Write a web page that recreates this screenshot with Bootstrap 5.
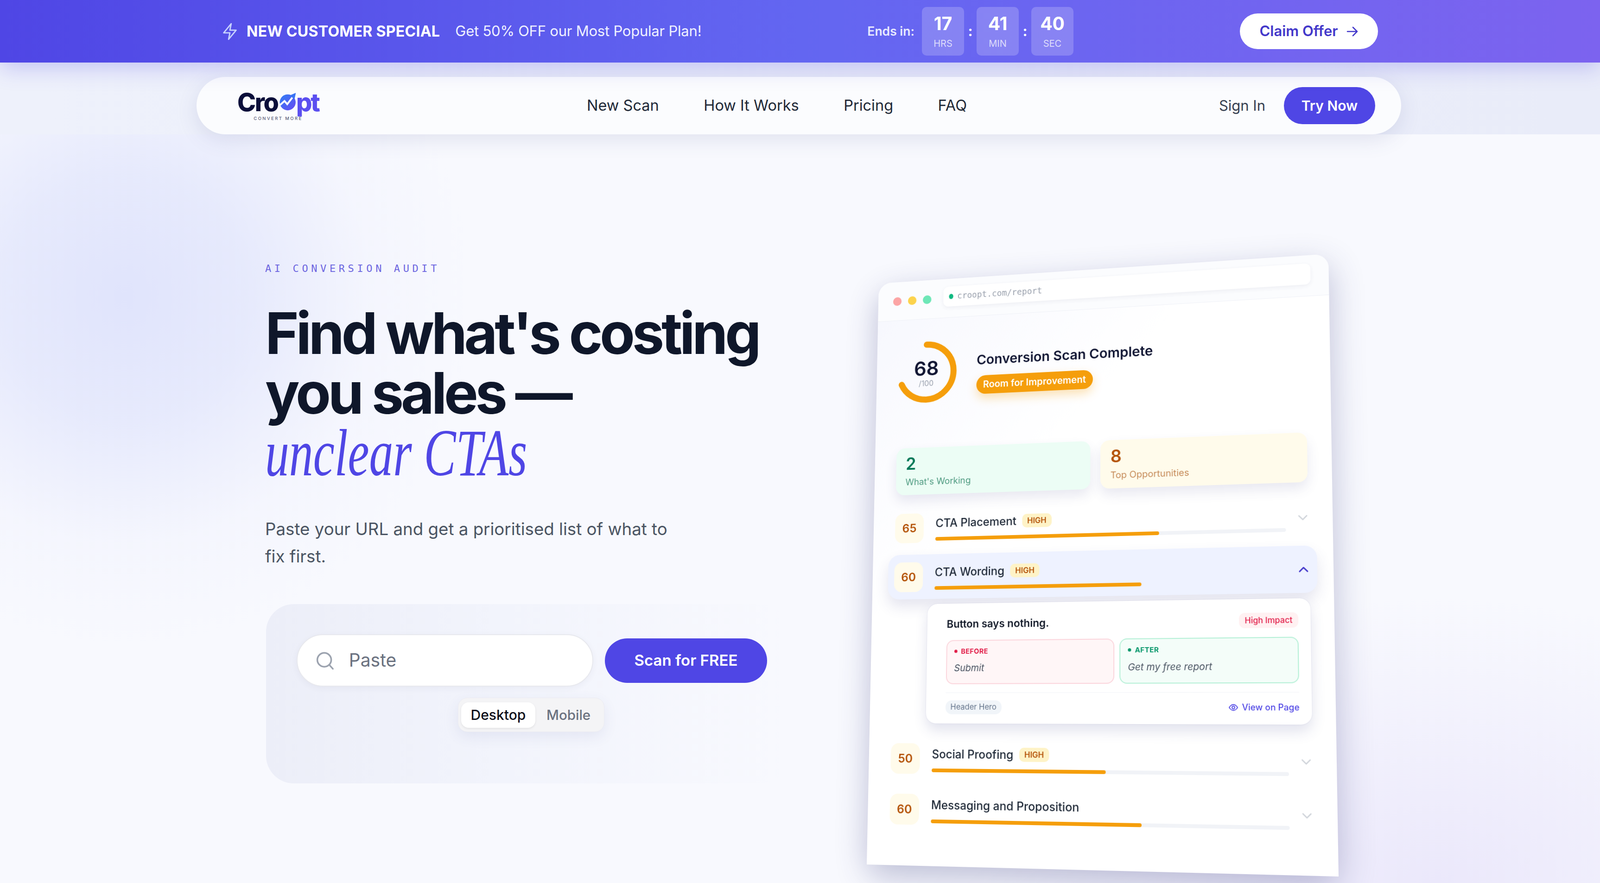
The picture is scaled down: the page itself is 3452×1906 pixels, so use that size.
<!DOCTYPE html>
<html lang="en">
<head>
    <meta charset="UTF-8" />
    <meta name="viewport" content="width=device-width, initial-scale=1" />
    <title>Croopt - AI Conversion Audit</title>
    <link href="https://cdn.jsdelivr.net/npm/bootstrap@5.3.0/dist/css/bootstrap.min.css" rel="stylesheet" />
    <style>
        html, body { margin: 0; height: 1906px; overflow: hidden; }
        body { font-family: Inter, "Liberation Sans", sans-serif; color: #111827; background: #f8f9ff; }

        .page-shell {
            height: 1906px; overflow: hidden;
            background:
                radial-gradient(circle 760px at 270px 640px, #e0e4fc 0%, rgba(226,230,252,.8) 35%, rgba(238,240,253,.35) 70%, rgba(238,240,253,0) 100%),
                radial-gradient(ellipse 1000px 620px at 3100px 1906px, #ebe8fb 0%, rgba(235,232,251,0) 100%),
                #f8f9fe;
        }

        /* promo strip */
        .promo-bar {
            height: 135px; padding: 0 479px 0 479px; color: #fff; position: relative; z-index: 3;
            background: linear-gradient(90deg, #4f46e5 0%, #6366f1 50%, #7c63ef 100%);
            box-shadow: 0 12px 44px rgba(79,70,229,.26);
        }
        .promo-strong { font-size: 32px; font-weight: 700; margin-left: 19px; letter-spacing: .3px; }
        .promo-text { font-size: 31px; margin-left: 33px; letter-spacing: -.22px; color: #eef0ff; }
        .ends-label { font-size: 26.5px; font-weight: 600; margin-left: 358px; margin-right: 16px; color: #e8eaff; }
        .time-box { width: 91px; height: 105px; background: rgba(255,255,255,.2); border-radius: 10px; text-align: center; }
        .time-num { font-size: 39px; font-weight: 700; line-height: 1; margin-top: 16px; }
        .time-unit { font-size: 20px; line-height: 1; margin-top: 14px; color: rgba(255,255,255,.72); }
        .time-sep { width: 27px; text-align: center; font-size: 30px; font-weight: 700; }
        .claim-btn {
            width: 298px; height: 77px; margin-left: auto; margin-right: 0;
            background: #fff; color: #4338ca; font-size: 31px; font-weight: 600;
            display: flex; align-items: center; justify-content: center; gap: 18px; border: 0;
        }

        /* header + nav */
        .head-zone {
            height: 155px; padding: 31px 429px 0 424px;
            background: linear-gradient(90deg, #eef1fb 0%, #e9ecf9 100%);
        }
        .main-nav {
            height: 124px; padding: 0 56px 0 88px; background: #fbfcfe;
            box-shadow: 0 12px 44px rgba(70,74,140,.13);
        }
        .logo-box { width: 176px; height: 72px; position: relative; }
        .logo-word { font-size: 54px; font-weight: 800; line-height: 54px; letter-spacing: -2.4px; color: #0b0f3a; display: flex; align-items: flex-end; margin-top: 2px; }
        .logo-word svg { margin: 0 1px 9px 3px; }
        .logo-end { color: #5b4ff0; letter-spacing: -3px; }
        .logo-tag { font-size: 9.5px; letter-spacing: 2.4px; color: #5b5f7a; text-align: center; line-height: 12px; margin-top: 2px; font-weight: 500; }
        .main-links { margin-left: 578px; gap: 96.5px; }
        .main-nav .main-links .nav-link { font-size: 32.5px; font-weight: 400; color: #1f2937; padding: 0; }
        .signin-link { font-size: 31px; font-weight: 400; color: #374151; margin-left: auto; margin-right: 40px; text-decoration: none; }
        .try-btn { width: 197px; height: 80px; background: #4f46e5; color: #fff; font-size: 30px; font-weight: 600; border: 0; }

        /* hero */
        .hero-left { padding: 273px 0 0 572px; flex-shrink: 0; box-sizing: content-box; width: 752px; margin-right: 572px; }
        .eyebrow { font-family: "DejaVu Sans Mono", "Liberation Mono", monospace; font-size: 22px; line-height: 33px; letter-spacing: 6.6px; color: #6d66e0; margin-bottom: 59px; }
        .hero-title { font-family: Inter, sans-serif; font-size: 124px; line-height: 129px; font-weight: 700; letter-spacing: -6.3px; color: #0f172a; margin: 0 0 66px; white-space: nowrap; }
        .hero-accent { font-family: "Liberation Serif", serif; font-size: 145px; font-style: italic; font-weight: 400; color: #4f46e5; letter-spacing: 0; display: inline-block; transform: scaleX(.715); transform-origin: 0 50%; }
        .hero-sub { font-size: 36.7px; line-height: 59px; color: #4b5563; margin: 0 0 74px; white-space: nowrap; }

        .scan-panel {
            width: 1130px; height: 387px; padding: 65px 0 0 66px; margin-left: 2px; border-radius: 60px;
            background: linear-gradient(90deg, #eceef8 0%, #f2f4fc 45%, rgba(246,248,255,0) 100%);
        }
        .url-field {
            width: 640px; height: 113px; background: #fff; border: 2px solid #e8e9ee; padding-left: 40px; gap: 32px;
            box-shadow: 0 4px 14px rgba(60,60,100,.05);
        }
        .url-input { font-size: 39px; border: 0; padding: 0; box-shadow: none; background: transparent; color: #374151; }
        .url-input::placeholder { color: #6b7280; opacity: 1; }
        .url-input:focus { box-shadow: none; }
        .scan-btn { width: 350px; height: 96px; margin-left: 25px; background: #4f46e5; color: #fff; font-size: 33px; font-weight: 600; border: 0; }
        .view-toggle {
            width: 316px; height: 74px; margin: 24px 0 0 348px; padding: 9px 6px 8px; border-radius: 20px;
            background: #f4f4f6; border: 1px solid #ececf2; box-shadow: 0 10px 30px rgba(70,74,140,.09); font-size: 30px;
        }
        .view-on { width: 160px; background: #fff; border-radius: 16px; color: #0f0f1a; font-weight: 500; box-shadow: 0 2px 5px rgba(0,0,0,.08); }
        .view-off { color: #6b7280; font-weight: 500; margin-left: 24px; font-size: 29.5px; }

        /* tilted report mock */
        .mock-card {
            width: 1000px; height: 1300px; margin-top: 322px; flex-shrink: 0; border: 0; border-radius: 30px;
            background: #fff; box-shadow: 0 24px 70px rgba(50,52,120,.3);
            transform-origin: 0 0;
            transform: matrix3d(.90591,-.05977,0,-.00006608, -.01908,.92052,0,-.00003517, 0,0,1,0, 0,0,0,1);
        }
        .mock-top { height: 90px; padding: 0 38px 0 35px; background: #fbfcfe; border-bottom: 1px solid #eff1f7; border-radius: 30px 30px 0 0; }
        .win-dot { width: 20px; height: 20px; border-radius: 50%; margin-right: 15px; }
        .url-strip { flex: 1; height: 46px; margin: -8px 0 0 13px; padding-left: 13px; gap: 9px; background: #fff; border-radius: 12px; box-shadow: 0 3px 10px rgba(60,60,100,.07); font-family: "DejaVu Sans Mono", "Liberation Mono", monospace; font-size: 19px; color: #9ca3af; }
        .url-dot { width: 10px; height: 12px; border-radius: 50%; background: #10b981; }
        .mock-body { padding: 52px 50px 0; background: linear-gradient(135deg, #f7f8fe 0%, #fff 32%); }
        .score-ring { width: 146px; height: 146px; margin: -3px 0 0 -7px; }
        .ring-text { inset: 0; top: 43px; text-align: center; }
        .ring-num { font-size: 45px; font-weight: 600; line-height: 44px; color: #111633; }
        .ring-max { font-size: 17px; line-height: 20px; margin-top: 2px; color: #9ca3af; }
        .scan-head { margin-left: 43px; padding-top: 30px; }
        .scan-title { font-size: 30px; font-weight: 600; line-height: 36px; color: #111633; }
        .scan-tag { height: 42px; width: 262px; margin-top: 18px; background: #f59e0b; color: #fff; font-size: 21px; font-weight: 600; box-shadow: 0 10px 22px rgba(245,158,11,.3); }
        .stat-row { gap: 22px; margin-top: 99px; }
        .stat-tile { height: 106px; flex: 1; padding: 12px 22px; border-radius: 20px; box-shadow: 0 14px 26px rgba(70,74,140,.12); }
        .stat-good { background: #ecfdf5; }
        .stat-warn { background: #fffbeb; }
        .stat-num { font-size: 38px; font-weight: 600; line-height: 46px; }
        .stat-label { font-size: 20px; line-height: 30px; margin-top: 4px; }
        .stat-good .stat-num { color: #047857; } .stat-good .stat-label { color: #4e9a80; }
        .stat-warn .stat-num { color: #b45309; } .stat-warn .stat-label { color: #c58a58; }

        .fix-list { margin: 25px -17px 0; }
        .fix-row { height: 99px; padding: 16px 17px; margin-bottom: 10px; border-radius: 26px; }
        .fix-open { background: #eef2ff; box-shadow: 0 16px 30px rgba(70,74,140,.14); margin: 0 0 11px 3px; padding-left: 14px; }
        .fix-score { width: 66px; height: 66px; flex-shrink: 0; border-radius: 18px; background: #fffbeb; color: #b45309; font-size: 26px; font-weight: 600; }
        .fix-main { flex: 1; margin-left: 27px; padding-top: 2px; }
        .fix-name { font-size: 25px; font-weight: 500; line-height: 36px; color: #1f2937; }
        .high-tag { font-size: 17px; font-weight: 600; height: 30px; padding: 0 11px; margin-left: 13px; border-radius: 10px; background: #fef3c7; color: #b45309; }
        .fix-track { height: 8px; margin-top: 13px; border-radius: 4px; background: #f1f3f7; }
        .fix-open .fix-track { background: transparent; }
        .fix-fill { height: 8px; border-radius: 4px; background: #f59e0b; }
        .fix-chev { margin-left: 24px; flex-shrink: 0; }

        .fix-detail { margin: 0 15px 26px 95px; height: 261px; padding: 28px 25px 0 44px; background: #fff; border-radius: 22px; box-shadow: 0 14px 28px rgba(70,74,140,.16), 0 0 2px rgba(70,74,140,.18); }
        .detail-title { font-size: 23px; font-weight: 600; color: #111827; }
        .impact-tag { font-size: 17px; font-weight: 500; height: 32px; padding: 0 12px; background: #fff1f2; color: #e11d48; border-radius: 12px; }
        .ba-row { gap: 11px; margin-top: 17px; }
        .ba-box { height: 96px; padding: 12px 16px; border-radius: 16px; border: 2px solid; }
        .ba-before { flex: 0 0 49%; background: #fff6f7; border-color: #fbd5dc; }
        .ba-after { flex: 1; background: #f4fdf9; border-color: #b6f0d7; }
        .ba-label { font-size: 15px; font-weight: 700; line-height: 22px; letter-spacing: .4px; }
        .ba-before .ba-label { color: #e11d48; } .ba-after .ba-label { color: #059669; }
        .ba-mark { display: inline-block; width: 7px; height: 7px; border-radius: 50%; background: currentColor; margin: 0 8px 2px 0; }
        .ba-copy { font-size: 20.5px; font-style: italic; color: #4b5563; margin-top: 12px; line-height: 26px; }
        .detail-foot { margin-top: 18px; border-top: 1px solid #f1f3f7; padding-top: 16px; }
        .place-tag { font-size: 17px; height: 30px; padding: 0 11px; color: #64748b; background: #f1f5f9; border-radius: 14px; }
        .page-link-txt { font-size: 18px; font-weight: 500; color: #4f46e5; gap: 8px; }
    </style>
</head>

<body>
<div class="page-shell">

    <!-- PROMO -->
    <div class="promo-bar d-flex align-items-center">
        <svg width="34" height="38" viewBox="0 0 24 27" fill="none" stroke="#c7d2fe" stroke-width="2" stroke-linejoin="round"><path d="M14 1.5 2.5 15.5H12L10 25.5 21.5 11.5H12Z"/></svg>
        <span class="promo-strong">NEW CUSTOMER SPECIAL</span>
        <span class="promo-text">Get 50% OFF our Most Popular Plan!</span>
        <span class="ends-label">Ends in:</span>
        <div class="time-box"><div class="time-num">17</div><div class="time-unit">HRS</div></div>
        <div class="time-sep">:</div>
        <div class="time-box"><div class="time-num">41</div><div class="time-unit">MIN</div></div>
        <div class="time-sep">:</div>
        <div class="time-box"><div class="time-num">40</div><div class="time-unit">SEC</div></div>
        <button class="btn rounded-pill claim-btn">Claim Offer
            <svg width="26" height="24" viewBox="0 0 26 24" fill="none" stroke="#4338ca" stroke-width="2.6" stroke-linecap="round" stroke-linejoin="round"><path d="M2 12h21M14 3l9 9-9 9"/></svg>
        </button>
    </div>

    <!-- NAV -->
    <div class="head-zone">
        <nav class="navbar navbar-expand rounded-pill main-nav flex-nowrap">
            <div class="logo-box">
                <div class="logo-word">Cro<svg width="36" height="40" viewBox="0 0 36 40"><defs><linearGradient id="lg" x1="0" y1="0" x2="1" y2="1"><stop offset="0" stop-color="#2f80f5"/><stop offset="1" stop-color="#6a48f2"/></linearGradient></defs><circle cx="18" cy="22" r="17.5" fill="url(#lg)"/><path d="M1 28 11 19l6 7L30 9" fill="none" stroke="#fbfcfe" stroke-width="4"/><path d="M22 7 36 1l-3 14Z" fill="#3a74f4"/></svg><span class="logo-end">pt</span></div>
                <div class="logo-tag">CONVERT MORE</div>
            </div>
            <ul class="navbar-nav main-links">
                <li class="nav-item"><a class="nav-link" href="#">New Scan</a></li>
                <li class="nav-item"><a class="nav-link" href="#">How It Works</a></li>
                <li class="nav-item"><a class="nav-link" href="#">Pricing</a></li>
                <li class="nav-item"><a class="nav-link" href="#">FAQ</a></li>
            </ul>
            <a class="signin-link" href="#">Sign In</a>
            <button class="btn rounded-pill try-btn">Try Now</button>
        </nav>
    </div>

    <!-- HERO -->
    <div class="d-flex">
        <div class="hero-left">
            <div class="eyebrow">AI CONVERSION AUDIT</div>
            <h1 class="hero-title">Find what's costing<br>you sales —<br><span class="hero-accent">unclear CTAs</span></h1>
            <p class="hero-sub">Paste your URL and get a prioritised list of what to<br>fix first.</p>

            <div class="scan-panel">
                <div class="d-flex align-items-center">
                    <div class="d-flex align-items-center rounded-pill url-field">
                        <svg width="44" height="44" viewBox="0 0 44 44" fill="none" stroke="#9ca3af" stroke-width="4" stroke-linecap="round"><circle cx="20" cy="20" r="17"/><path d="M32 32l9 10"/></svg>
                        <input class="form-control url-input" type="text" placeholder="Paste" />
                    </div>
                    <button class="btn rounded-pill scan-btn">Scan for FREE</button>
                </div>
                <div class="d-flex align-items-center view-toggle">
                    <div class="d-flex align-items-center justify-content-center h-100 view-on">Desktop</div>
                    <div class="view-off">Mobile</div>
                </div>
            </div>
        </div>

        <!-- REPORT MOCK -->
        <div class="card mock-card">
            <div class="d-flex align-items-center mock-top">
                <span class="win-dot" style="background:#fca5a5"></span>
                <span class="win-dot" style="background:#fcd34d"></span>
                <span class="win-dot" style="background:#6ee7b7"></span>
                <div class="d-flex align-items-center url-strip"><span class="url-dot"></span>croopt.com/report</div>
            </div>
            <div class="mock-body flex-grow-1">
                <div class="d-flex">
                    <div class="position-relative score-ring">
                        <svg width="146" height="146" viewBox="0 0 146 146"><circle cx="73" cy="73" r="63" fill="none" stroke="#f59e0b" stroke-width="14" stroke-linecap="round" stroke-dasharray="269 396" transform="rotate(-90 73 73)"/></svg>
                        <div class="position-absolute ring-text">
                            <div class="ring-num">68</div>
                            <div class="ring-max">/100</div>
                        </div>
                    </div>
                    <div class="scan-head">
                        <div class="scan-title">Conversion Scan Complete</div>
                        <div class="d-flex align-items-center justify-content-center rounded-pill scan-tag">Room for Improvement</div>
                    </div>
                </div>

                <div class="d-flex stat-row">
                    <div class="stat-tile stat-good"><div class="stat-num">2</div><div class="stat-label">What's Working</div></div>
                    <div class="stat-tile stat-warn"><div class="stat-num">8</div><div class="stat-label">Top Opportunities</div></div>
                </div>

                <div class="fix-list">
                    <div class="d-flex align-items-center fix-row">
                        <div class="d-flex align-items-center justify-content-center fix-score">65</div>
                        <div class="fix-main">
                            <div class="d-flex align-items-center fix-name">CTA Placement <span class="d-flex align-items-center high-tag">HIGH</span></div>
                            <div class="fix-track"><div class="fix-fill" style="width:65%"></div></div>
                        </div>
                        <svg class="fix-chev" width="22" height="14" viewBox="0 0 22 14" fill="none" stroke="#d1d5db" stroke-width="2.6" stroke-linecap="round" stroke-linejoin="round"><path d="M3 3l8 8 8-8"/></svg>
                    </div>
                    <div class="d-flex align-items-center fix-row fix-open">
                        <div class="d-flex align-items-center justify-content-center fix-score">60</div>
                        <div class="fix-main">
                            <div class="d-flex align-items-center fix-name">CTA Wording <span class="d-flex align-items-center high-tag">HIGH</span></div>
                            <div class="fix-track"><div class="fix-fill" style="width:60%"></div></div>
                        </div>
                        <svg class="fix-chev" width="22" height="14" viewBox="0 0 22 14" fill="none" stroke="#4338ca" stroke-width="3" stroke-linecap="round" stroke-linejoin="round"><path d="M3 11l8-8 8 8"/></svg>
                    </div>

                    <div class="fix-detail">
                        <div class="d-flex justify-content-between align-items-center">
                            <div class="detail-title">Button says nothing.</div>
                            <div class="d-flex align-items-center impact-tag">High Impact</div>
                        </div>
                        <div class="d-flex ba-row">
                            <div class="ba-box ba-before">
                                <div class="ba-label"><span class="ba-mark"></span>BEFORE</div>
                                <div class="ba-copy">Submit</div>
                            </div>
                            <div class="ba-box ba-after">
                                <div class="ba-label"><span class="ba-mark"></span>AFTER</div>
                                <div class="ba-copy">Get my free report</div>
                            </div>
                        </div>
                        <div class="d-flex justify-content-between align-items-center detail-foot">
                            <div class="d-flex align-items-center place-tag">Header Hero</div>
                            <div class="d-flex align-items-center page-link-txt">
                                <svg width="20" height="20" viewBox="0 0 20 20" fill="none" stroke="#4f46e5" stroke-width="1.8"><path d="M1.5 10S4.500 4 10 4s8.500 6 8.500 6-3 6-8.500 6-8.500-6-8.500-6Z"/><circle cx="10" cy="10" r="2.800"/></svg>
                                View on Page
                            </div>
                        </div>
                    </div>

                    <div class="d-flex align-items-center fix-row">
                        <div class="d-flex align-items-center justify-content-center fix-score">50</div>
                        <div class="fix-main">
                            <div class="d-flex align-items-center fix-name">Social Proofing <span class="d-flex align-items-center high-tag">HIGH</span></div>
                            <div class="fix-track"><div class="fix-fill" style="width:50%"></div></div>
                        </div>
                        <svg class="fix-chev" width="22" height="14" viewBox="0 0 22 14" fill="none" stroke="#d1d5db" stroke-width="2.6" stroke-linecap="round" stroke-linejoin="round"><path d="M3 3l8 8 8-8"/></svg>
                    </div>
                    <div class="d-flex align-items-center fix-row">
                        <div class="d-flex align-items-center justify-content-center fix-score">60</div>
                        <div class="fix-main">
                            <div class="d-flex align-items-center fix-name">Messaging and Proposition</div>
                            <div class="fix-track"><div class="fix-fill" style="width:60%"></div></div>
                        </div>
                        <svg class="fix-chev" width="22" height="14" viewBox="0 0 22 14" fill="none" stroke="#d1d5db" stroke-width="2.6" stroke-linecap="round" stroke-linejoin="round"><path d="M3 3l8 8 8-8"/></svg>
                    </div>
                </div>
            </div>
        </div>
    </div>
</div>
<script src="https://cdn.jsdelivr.net/npm/bootstrap@5.3.0/dist/js/bootstrap.bundle.min.js"></script>
</body>
</html>
